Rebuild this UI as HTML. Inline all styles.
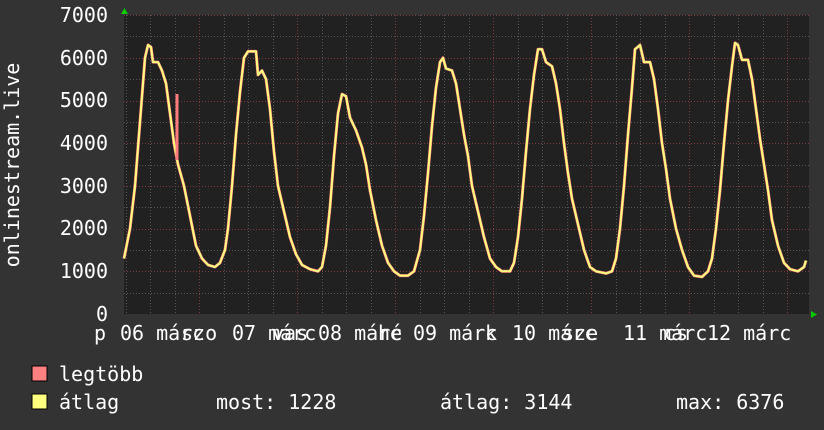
<!DOCTYPE html>
<html><head><meta charset="utf-8">
<style>
html,body{margin:0;padding:0;background:#333333;}
svg{display:block;}
text{font-family:"DejaVu Sans Mono","Liberation Mono",monospace;font-size:20px;fill:#ffffff;}
</style></head>
<body>
<svg id="g" width="824" height="430" xmlns="http://www.w3.org/2000/svg">
<rect x="0" y="0" width="824" height="430" fill="#333333"/>
<rect x="124" y="15" width="685" height="299" fill="#212121"/>
<g id="grid"></g>
<polyline id="mx" fill="none" stroke="#ff7a7a" stroke-width="3" stroke-linejoin="round"/>
<polyline id="av" fill="none" stroke="#ffff80" stroke-width="2" stroke-linejoin="round"/>
<polygon points="121,14 128,14 124.5,8" fill="#00cc00"/>
<polygon points="811,311 811,318 817,314.5" fill="#00cc00"/>
<g text-anchor="end">
<text x="108" y="22">7000</text>
<text x="108" y="65">6000</text>
<text x="108" y="107">5000</text>
<text x="108" y="150">4000</text>
<text x="108" y="193">3000</text>
<text x="108" y="235">2000</text>
<text x="108" y="278">1000</text>
<text x="108" y="321">0</text>
</g>
<text transform="translate(19,165) rotate(-90)" text-anchor="middle">onlinestream.live</text>
<text x="94" y="340">p</text>
<text x="120" y="340">06 márc</text>
<text x="181" y="340">szo</text>
<text x="232" y="340">07 márc</text>
<text x="272" y="340">vas</text>
<text x="318" y="340">08 márc</text>
<text x="378" y="340">hé</text>
<text x="413" y="340">09 márc</text>
<text x="485" y="340">k</text>
<text x="512" y="340">10 márc</text>
<text x="562" y="340">sze</text>
<text x="623" y="340">11 márc</text>
<text x="664" y="340">cs</text>
<text x="707" y="340">12 márc</text>
<rect x="32" y="366" width="15" height="15" fill="#ff8080" stroke="#000" stroke-width="1"/>
<rect x="32" y="394" width="15" height="15" fill="#ffff80" stroke="#000" stroke-width="1"/>
<text x="59" y="381">legtöbb</text>
<text x="59" y="409">átlag</text>
<text x="216" y="409">most: 1228</text>
<text x="440" y="409">átlag: 3144</text>
<text x="676" y="409">max: 6376</text>
</svg>
<script>
var ns="http://www.w3.org/2000/svg",g=document.getElementById("grid");
function ln(x1,y1,x2,y2,c){var l=document.createElementNS(ns,"line");l.setAttribute("x1",x1);l.setAttribute("y1",y1);l.setAttribute("x2",x2);l.setAttribute("y2",y2);l.setAttribute("stroke",c);l.setAttribute("stroke-width","1");l.setAttribute("stroke-dasharray","1,2");g.appendChild(l);}
for(var v=500;v<=7000;v+=500){var y=Math.round(314-v*0.0427)+0.5;ln(124,y,809,y,(v%1000==0)?"#7a3a3a":"#555555");}
for(var i=-8;i<30;i++){var x=Math.round(199+i*24.5)+0.5;if(x<126||x>808)continue;ln(x,15,x,314,(i%4==0)?"#7a3a3a":"#555555");}
var p=[[124,1300],[130,2000],[135,3000],[140,4500],[145,6000],[148,6300],[151,6250],[153,5900],[158,5900],[162,5700],[166,5400],[170,4700],[174,4000],[178,3500],[184,3000],[190,2300],[196,1600],[202,1300],[208,1150],[215,1100],[220,1200],[225,1500],[228,2000],[232,3000],[236,4200],[240,5200],[244,6000],[248,6150],[256,6150],[258,5600],[262,5700],[266,5500],[270,4800],[274,3800],[278,3000],[284,2400],[290,1800],[296,1400],[302,1150],[310,1050],[318,1000],[322,1100],[326,1600],[330,2500],[334,3700],[338,4700],[342,5150],[346,5100],[350,4600],[356,4300],[362,3900],[366,3500],[370,2900],[376,2200],[382,1600],[388,1200],[394,1000],[400,900],[408,900],[414,1000],[420,1500],[424,2300],[428,3300],[432,4400],[436,5300],[440,5900],[443,6000],[446,5750],[452,5700],[456,5400],[460,4800],[464,4200],[468,3700],[472,3000],[478,2400],[484,1800],[490,1300],[496,1100],[502,1000],[510,1000],[514,1200],[518,1800],[522,2700],[526,3800],[530,4800],[534,5600],[538,6200],[542,6200],[546,5900],[552,5800],[556,5400],[560,4800],[564,4000],[568,3300],[572,2700],[578,2100],[584,1500],[590,1100],[596,1000],[606,950],[612,1000],[616,1300],[620,2000],[624,3000],[628,4200],[632,5300],[635,6200],[640,6300],[644,5900],[650,5900],[654,5500],[658,4800],[662,4000],[666,3400],[670,2700],[676,2000],[682,1500],[688,1100],[694,900],[702,870],[708,1000],[712,1300],[716,2000],[720,2900],[724,4000],[728,5000],[732,5800],[735,6350],[738,6300],[742,5950],[748,5950],[752,5500],[756,4800],[760,4100],[764,3500],[768,2900],[772,2200],[778,1600],[784,1200],[790,1050],[798,1000],[804,1100],[806,1250]];
var s=p.map(function(q){return q[0]+","+(314-q[1]*0.0427).toFixed(1);}).join(" ");
document.getElementById("mx").setAttribute("points",s);
document.getElementById("av").setAttribute("points",s);
ln(177,94,177,160,"#ff7a7a");var sp=g.lastChild;sp.removeAttribute("stroke-dasharray");sp.setAttribute("stroke-width","3");document.getElementById("g").appendChild(sp);
</script>
</body></html>
